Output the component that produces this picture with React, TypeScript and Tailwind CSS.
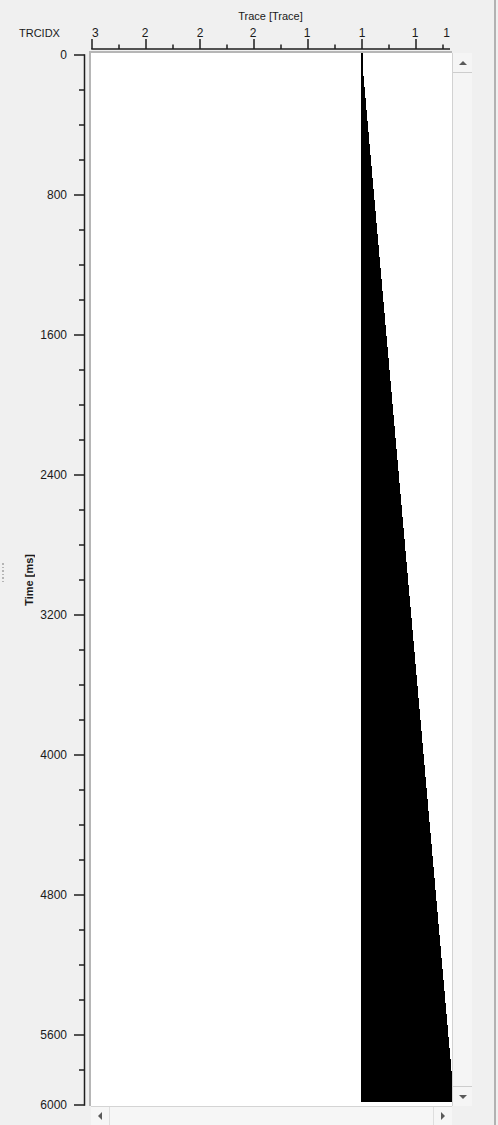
import React from "react";

const FONT = '"Liberation Sans", Arial, sans-serif';

function TopAxis() {
  // local x = global - 85, local y = global - 24
  const majors = [92, 146, 200, 254, 308, 362, 416];
  const minors = [119, 173, 227, 281, 335, 389, 443];
  const labels: { x: number; t: string; a: "start" | "middle" | "end" }[] = [
    { x: 92, t: "3", a: "start" },
    { x: 145, t: "2", a: "middle" },
    { x: 200, t: "2", a: "middle" },
    { x: 253, t: "2", a: "middle" },
    { x: 307, t: "1", a: "middle" },
    { x: 362, t: "1", a: "middle" },
    { x: 415, t: "1", a: "middle" },
    { x: 450, t: "1", a: "end" },
  ];
  return (
    <svg width={370} height={27} className="block shrink-0 overflow-visible">
      <line x1={92 - 85 - 0.75} y1={25} x2={450 - 85} y2={25} stroke="#1e1e1e" strokeWidth={1.5} />
      {majors.map((x) => (
        <line key={"M" + x} x1={x - 85} y1={15} x2={x - 85} y2={25} stroke="#1e1e1e" strokeWidth={1.5} />
      ))}
      {minors.map((x) => (
        <line key={"m" + x} x1={x - 85} y1={20.5} x2={x - 85} y2={25} stroke="#1e1e1e" strokeWidth={1.5} />
      ))}
      {labels.map((l, i) => (
        <text key={i} x={l.x - 85} y={12.7} textAnchor={l.a} fontFamily={FONT} fontSize={12} fill="#1a1a1a">
          {l.t}
        </text>
      ))}
    </svg>
  );
}

function LeftAxis() {
  // local x = global - 40, local y = global - 51
  const ticks: number[] = [];
  for (let y = 55; y <= 1105; y += 35) ticks.push(y);
  const majorLabel = (y: number) => {
    if (y === 1105) return "6000";
    if ((y - 55) % 140 === 0) return String(((y - 55) / 140) * 800);
    return null;
  };
  return (
    <svg width={49} height={1074} className="block shrink-0 overflow-visible">
      <line x1={44.5} y1={55 - 51 - 0.75} x2={44.5} y2={1105 - 51 + 0.75} stroke="#1e1e1e" strokeWidth={1.5} />
      {ticks.map((y) => {
        const lbl = majorLabel(y);
        const ly = y - 51;
        return (
          <g key={y}>
            <line x1={lbl ? 34 : 39} y1={ly} x2={44.5} y2={ly} stroke="#1e1e1e" strokeWidth={1.5} />
            {lbl && (
              <text x={27} y={ly + 4.3} textAnchor="end" fontFamily={FONT} fontSize={12} fill="#1a1a1a">
                {lbl}
              </text>
            )}
          </g>
        );
      })}
    </svg>
  );
}

function Plot() {
  // local x = global - 91, local y = global - 53
  return (
    <svg width={361} height={1053} className="block" shapeRendering="crispEdges">
      <rect x={270} y={0} width={2} height={1049} fill="#000" />
      <polygon points="270,17 272,17 361,1023 361,1049 270,1049" fill="#000" />
    </svg>
  );
}

function Arrow({ dir }: { dir: "up" | "down" | "left" | "right" }) {
  const vertical = dir === "up" || dir === "down";
  const w = vertical ? 8 : 4;
  const h = vertical ? 4 : 8;
  const pts =
    dir === "up"
      ? "0,4 4,0 8,4"
      : dir === "down"
      ? "0,0 8,0 4,4"
      : dir === "left"
      ? "4,0 4,8 0,4"
      : "0,0 0,8 4,4";
  return (
    <svg width={w} height={h} className="block">
      <polygon points={pts} fill="#5a5a5a" />
    </svg>
  );
}

export default function App() {
  return (
    <div
      className="w-[498px] h-[1125px] bg-[#f0f0f0] flex overflow-hidden text-[#1a1a1a]"
      style={{ fontFamily: FONT }}
    >
      <div className="w-[494px] flex flex-col shrink-0">
        {/* title */}
        <div className="h-[24px] flex shrink-0">
          <div className="w-[89px] shrink-0" />
          <div className="w-[363px] text-center text-[11px] leading-[11px] pt-[11px]">Trace [Trace]</div>
        </div>
        {/* top axis row */}
        <div className="h-[27px] flex shrink-0">
          <div className="w-[85px] shrink-0 pl-[19px] pt-[3.5px] text-[11px] leading-[11px]">TRCIDX</div>
          <TopAxis />
        </div>
        {/* body */}
        <div className="h-[1074px] flex shrink-0">
          <div className="w-[89px] flex shrink-0">
            <div className="w-[23px] flex flex-col justify-center pb-[31px] pl-[2px]">
              <div className="flex flex-col gap-[2px]">
                {[0, 1, 2, 3, 4, 5].map((i) => (
                  <span key={i} className="block w-[1.5px] h-[1.5px] bg-[#b4b4b4]" />
                ))}
              </div>
            </div>
            <div className="w-[13px] flex items-center justify-center pb-[16px]">
              <span className="[writing-mode:vertical-rl] rotate-180 font-bold text-[11px] leading-[13px] whitespace-nowrap">
                Time [ms]
              </span>
            </div>
            <div className="w-[4px]" />
            <LeftAxis />
          </div>
          <div className="w-[363px] flex flex-col shrink-0">
            <div className="h-[1055px] border-l-2 border-t-2 border-[#b6b6b6] bg-white overflow-hidden shrink-0">
              <Plot />
            </div>
            <div className="h-[19px] ml-[2px] border-t border-[#d4d4d4] bg-[#f6f6f6] flex shrink-0">
              <div className="w-[19px] border-r border-[#dedede] flex items-center justify-center">
                <Arrow dir="left" />
              </div>
              <div className="flex-1" />
              <div className="w-[19px] border-l border-[#dedede] flex items-center justify-center">
                <Arrow dir="right" />
              </div>
            </div>
          </div>
          <div className="w-[20px] mt-[2px] h-[1053px] bg-[#f5f5f5] border-l border-[#d2d2d2] flex flex-col shrink-0">
            <div className="h-[20px] border-b border-[#cdcdcd] flex items-center justify-center">
              <Arrow dir="up" />
            </div>
            <div className="flex-1" />
            <div className="h-[20px] border-t border-[#cdcdcd] flex items-center justify-center">
              <Arrow dir="down" />
            </div>
          </div>
          <div className="flex-1" />
        </div>
      </div>
      <div className="w-[2px] bg-[#b2b2b2] shrink-0" />
      <div className="flex-1" />
    </div>
  );
}
